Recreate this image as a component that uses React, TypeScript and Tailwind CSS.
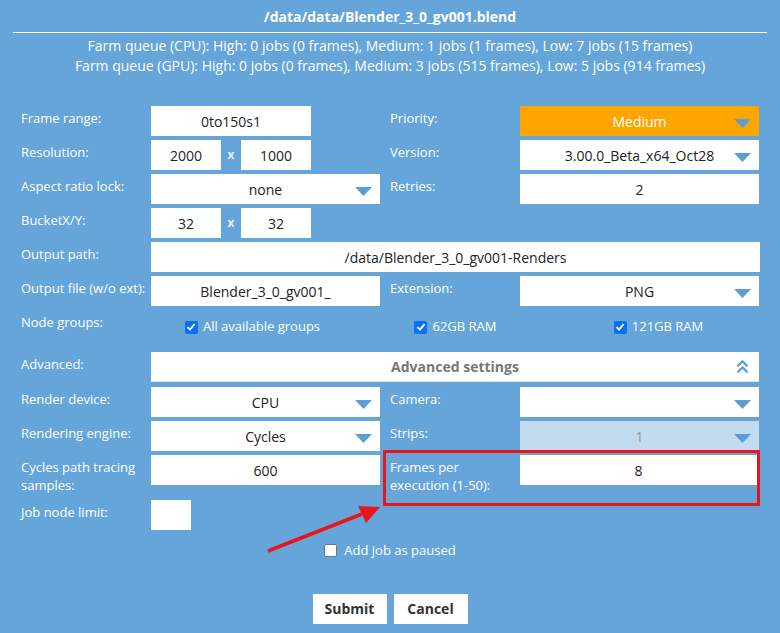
import React from 'react'
import { twMerge } from 'tailwind-merge'
import { ChevronsUp } from 'lucide-react'

function Label({ children, className }: { children: React.ReactNode; className?: string }) {
  return (
    <div className={twMerge('w-[130px] shrink-0 pt-[3px] text-[13px] leading-[18px] text-white', className)}>
      {children}
    </div>
  )
}

function Field({ value, className }: { value?: string; className?: string }) {
  return (
    <div className={twMerge('flex h-[30px] shrink-0 items-center justify-center bg-white text-[14px] text-[#222]', className)}>
      {value}
    </div>
  )
}

function Arrow() {
  return (
    <svg width="17" height="9" viewBox="0 0 17 9" className="absolute right-[8px] top-[13px]">
      <polygon points="0,0 17,0 8.5,9" fill="#5d9dd6" />
    </svg>
  )
}

function Select({ value, className }: { value?: string; className?: string }) {
  return (
    <div className={twMerge('relative flex h-[30px] shrink-0 items-center justify-center bg-white text-[14px] text-[#222]', className)}>
      {value}
      <Arrow />
    </div>
  )
}

function Check({ checked }: { checked?: boolean }) {
  if (!checked) {
    return <span className="inline-block h-[13px] w-[13px] rounded-[2px] border border-[#767676] bg-white" />
  }
  return (
    <span className="inline-flex h-[13px] w-[13px] items-center justify-center rounded-[2px] bg-[#0b6ff2]">
      <svg width="10" height="10" viewBox="0 0 10 10">
        <path d="M1.5 5.2 L4 7.6 L8.6 2.2" stroke="white" strokeWidth="1.8" fill="none" />
      </svg>
    </span>
  )
}

function Row({ children, className }: { children: React.ReactNode; className?: string }) {
  return <div className={twMerge('flex items-start', className)}>{children}</div>
}

export default function App() {
  return (
    <div className="relative h-[633px] w-[780px] overflow-hidden bg-[#65a5da] font-['Open_Sans',sans-serif]">
      {/* Header */}
      <div className="px-[13px] pt-[7px]">
        <div className="text-center text-[14px] font-bold leading-[20px] text-white">/data/data/Blender_3_0_gv001.blend</div>
        <div className="mt-[5px] h-px bg-white" />
        <div className="mt-[3px] text-center text-[14px] leading-[20px] text-white">
          <div>Farm queue (CPU): High: 0 jobs (0 frames), Medium: 1 jobs (1 frames), Low: 7 jobs (15 frames)</div>
          <div>Farm queue (GPU): High: 0 jobs (0 frames), Medium: 3 jobs (515 frames), Low: 5 jobs (914 frames)</div>
        </div>
      </div>

      {/* Form */}
      <div className="mt-[30px] flex flex-col pl-[21px]">
        <Row className="mb-[4px]">
          <Label>Frame range:</Label>
          <Field value="0to150s1" className="w-[160px]" />
          <div className="w-[79px]" />
          <Label>Priority:</Label>
          <div className="relative flex h-[30px] w-[239px] items-center justify-center bg-[#ffa500] text-[14px] text-white">
            Medium
            <Arrow />
          </div>
        </Row>
        <Row className="mb-[4px]">
          <Label>Resolution:</Label>
          <Field value="2000" className="w-[70px]" />
          <div className="flex h-[30px] w-[20px] items-center justify-center text-[12px] font-bold text-[#e6f0fa]">x</div>
          <Field value="1000" className="w-[70px]" />
          <div className="w-[79px]" />
          <Label>Version:</Label>
          <Select value="3.00.0_Beta_x64_Oct28" className="w-[239px]" />
        </Row>
        <Row className="mb-[4px]">
          <Label>Aspect ratio lock:</Label>
          <Select value="none" className="w-[229px]" />
          <div className="w-[10px]" />
          <Label>Retries:</Label>
          <Field value="2" className="w-[239px]" />
        </Row>
        <Row className="mb-[4px]">
          <Label>BucketX/Y:</Label>
          <Field value="32" className="w-[70px]" />
          <div className="flex h-[30px] w-[20px] items-center justify-center text-[12px] font-bold text-[#e6f0fa]">x</div>
          <Field value="32" className="w-[70px]" />
        </Row>
        <Row className="mb-[4px]">
          <Label>Output path:</Label>
          <Field value="/data/Blender_3_0_gv001-Renders" className="w-[609px]" />
        </Row>
        <Row className="mb-[4px]">
          <Label>Output file (w/o ext):</Label>
          <Field value="Blender_3_0_gv001_" className="w-[229px]" />
          <div className="w-[10px]" />
          <Label>Extension:</Label>
          <Select value="PNG" className="w-[239px]" />
        </Row>
        <Row className="mb-[4px] h-[38px]">
          <Label>Node groups:</Label>
          <div className="grid h-[34px] w-[609px] grid-cols-3 items-center text-[13px] text-white">
            {['All available groups', '62GB RAM', '121GB RAM'].map((g) => (
              <div key={g} className="flex items-center justify-center gap-[5px]">
                <Check checked />
                <span>{g}</span>
              </div>
            ))}
          </div>
        </Row>
        <Row className="mb-[5px]">
          <Label>Advanced:</Label>
          <div className="relative flex h-[30px] w-[608px] items-center justify-center border-b border-[#d8e8f6] bg-white text-[14px] font-bold text-[#777]">
            Advanced settings
            <ChevronsUp className="absolute right-[6px] top-[4px] h-[21px] w-[21px] text-[#5d9dd6]" strokeWidth={2.6} />
          </div>
        </Row>
        <Row className="mb-[4px]">
          <Label>Render device:</Label>
          <Select value="CPU" className="w-[229px]" />
          <div className="w-[10px]" />
          <Label>Camera:</Label>
          <Select className="w-[239px]" />
        </Row>
        <Row className="mb-[4px]">
          <Label>Rendering engine:</Label>
          <Select value="Cycles" className="w-[229px]" />
          <div className="w-[10px]" />
          <Label>Strips:</Label>
          <Select value="1" className="w-[239px] bg-[#c3dbf1] text-[#8d9aa6]" />
        </Row>
        <Row className="mb-[4px] h-[41px]">
          <Label>
            Cycles path tracing
            <br />
            samples:
          </Label>
          <Field value="600" className="w-[229px]" />
          <div className="w-[10px]" />
          <Label>
            Frames per
            <br />
            execution (1-50):
          </Label>
          <Field value="8" className="w-[237px]" />
        </Row>
        <Row>
          <Label>Job node limit:</Label>
          <Field className="w-[40px]" />
        </Row>

        <div className="mt-[11px] flex items-center justify-center gap-[7px] pr-[21px] text-[13px] text-white">
          <Check />
          <span>Add job as paused</span>
        </div>

        <div className="mt-[33px] flex justify-center gap-[7px] pr-[21px]">
          <button className="h-[30px] w-[74px] bg-white text-[14px] font-bold text-[#333]">Submit</button>
          <button className="h-[30px] w-[74px] bg-white text-[14px] font-bold text-[#333]">Cancel</button>
        </div>
      </div>

      {/* Annotation overlay */}
      <div className="absolute left-[383px] top-[450px] h-[56px] w-[377px] border-[3px] border-[#e8161a]" />
      <svg className="absolute left-0 top-0" width="780" height="633" viewBox="0 0 780 633">
        <line x1="268" y1="551" x2="362" y2="514" stroke="#e8161a" strokeWidth="3.5" />
        <polygon points="380,507 358,506 366,523" fill="#e8161a" />
      </svg>
    </div>
  )
}
